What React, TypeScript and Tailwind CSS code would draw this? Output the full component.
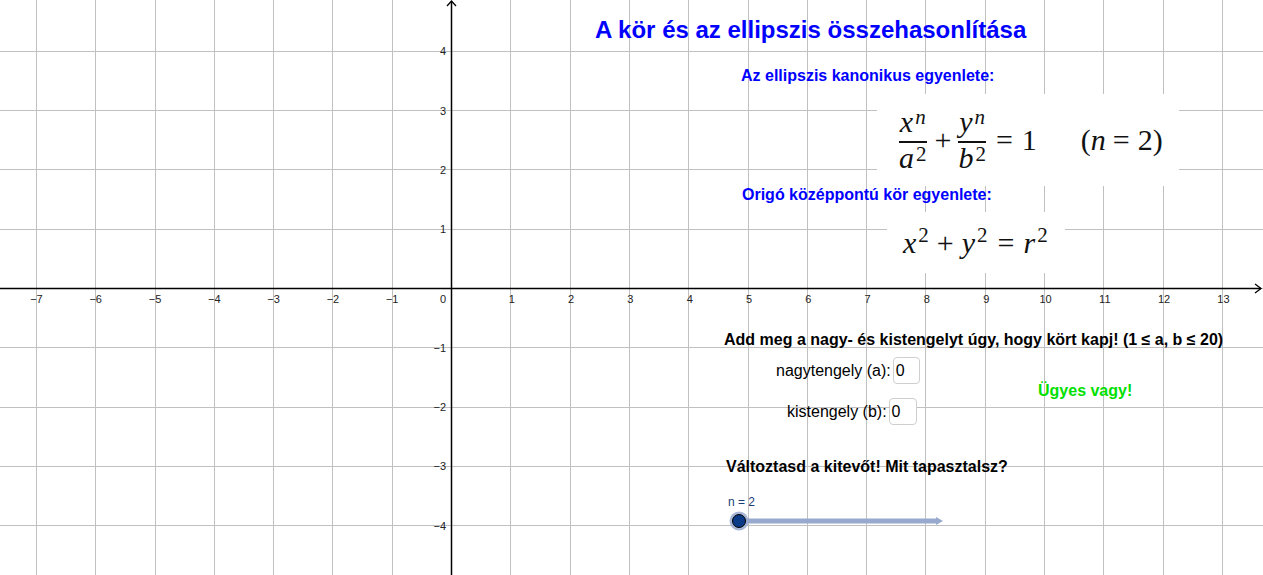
import React from "react";

const OX = 451.5;
const OY = 288.5;
const S = 59.3;
const W = 1263;
const H = 575;

const xs = Array.from({ length: 21 }, (_, i) => i - 7); // -7..13
const ys = Array.from({ length: 9 }, (_, i) => i - 4); // -4..4

const px = (v: number) => Math.floor(v) + 0.5;
const label = (n: number) => (n < 0 ? `\u2212${-n}` : `${n}`);

function Grid() {
  return (
    <svg className="absolute inset-0" width={W} height={H} viewBox={`0 0 ${W} ${H}`}>
      {xs.map((k) => (
        <line key={`v${k}`} x1={px(OX + k * S)} y1={0} x2={px(OX + k * S)} y2={H} stroke="#c0c0c0" strokeWidth={1} />
      ))}
      {ys.map((k) => (
        <line key={`h${k}`} x1={0} y1={px(OY - k * S)} x2={W} y2={px(OY - k * S)} stroke="#c0c0c0" strokeWidth={1} />
      ))}
      {/* axes */}
      <line x1={0} y1={OY} x2={1261} y2={OY} stroke="#000" strokeWidth={1.5} />
      <polyline points="1255,284 1261,288.5 1255,293" fill="none" stroke="#000" strokeWidth={1.3} />
      <line x1={OX} y1={1} x2={OX} y2={H} stroke="#000" strokeWidth={1.5} />
      <polyline points="447,6 451.5,1 456,6" fill="none" stroke="#000" strokeWidth={1.3} />
      {/* axis labels */}
      <g fontFamily="'Liberation Sans', Arial, sans-serif" fontSize={11} fill="#222">
        {xs.map((k) =>
          k === 0 ? null : (
            <text key={`xl${k}`} x={OX + k * S + (k > 0 ? 1 : 0)} y={303} textAnchor="middle">
              {label(k)}
            </text>
          )
        )}
        <text x={446} y={303} textAnchor="end">0</text>
        {ys.map((k) =>
          k === 0 ? null : (
            <text key={`yl${k}`} x={446} y={OY - k * S + 4} textAnchor="end">
              {label(k)}
            </text>
          )
        )}
      </g>
    </svg>
  );
}

// variable with a superscript; base line box is leading-none
function V({ c, sup, supCls = "" }: { c: string; sup: string; supCls?: string }) {
  return (
    <span className="inline-flex items-start leading-none">
      <span className="italic">{c}</span>
      <span className={`relative text-[21px] leading-none ml-[2px] ${sup === "2" ? "" : "italic"} ${supCls}`}>{sup}</span>
    </span>
  );
}

function Frac({ num, den }: { num: React.ReactNode; den: React.ReactNode }) {
  return (
    <span className="inline-flex flex-col items-center px-[1px]">
      <span className="flex">{num}</span>
      <span className="h-[1.5px] w-full bg-[#111] mt-[4px]" />
      <span className="flex">{den}</span>
    </span>
  );
}

function Slider() {
  return (
    <svg className="absolute left-0 top-0" width={W} height={H} viewBox={`0 0 ${W} ${H}`}>
      <line x1={739} y1={521} x2={937} y2={521} stroke="#97a9cc" strokeWidth={5} />
      <polygon points="936,517 943,521 936,525" fill="#97a9cc" />
      <circle cx={739} cy={521} r={9.5} fill="#9aaad0" opacity={0.85} />
      <circle cx={739} cy={521} r={6.5} fill="#0b3a86" stroke="#000" strokeWidth={1} />
    </svg>
  );
}

export default function App() {
  const sans = "font-['Liberation_Sans',Arial,sans-serif]";
  const serif = "font-['Liberation_Serif','Times_New_Roman',serif]";
  return (
    <div className={`relative w-[1263px] h-[575px] overflow-hidden bg-white ${sans}`}>
      <Grid />

      {/* formula boxes */}
      <div className={`absolute left-[877px] top-[94px] w-[302px] h-[92px] bg-white flex items-center pl-[21px] text-[30px] leading-none text-[#111] ${serif}`}>
        <Frac num={<V c="x" sup="n" />} den={<V c="a" sup="2" supCls="top-[1px]" />} />
        <span className="ml-[7px]">+</span>
        <span className="ml-[6px] flex">
          <Frac num={<V c="y" sup="n" />} den={<V c="b" sup="2" supCls="top-[1px]" />} />
        </span>
        <span className="ml-[9px]">=</span>
        <span className="ml-[9px]">1</span>
        <span className="ml-[44px]">(</span>
        <span className="italic">n</span>
        <span className="ml-[7px]">=</span>
        <span className="ml-[8px]">2)</span>
      </div>

      <div className={`absolute left-[887px] top-[212px] w-[178px] h-[61px] bg-white flex items-center pl-[16px] text-[30px] leading-none text-[#111] ${serif}`}>
        <V c="x" sup="2" supCls="-top-[3px]" />
        <span className="ml-[8px]">+</span>
        <span className="ml-[8px] flex">
          <V c="y" sup="2" supCls="-top-[3px]" />
        </span>
        <span className="ml-[10px]">=</span>
        <span className="ml-[9px] flex">
          <V c="r" sup="2" supCls="-top-[3px]" />
        </span>
      </div>

      {/* texts */}
      <div className="absolute left-[595px] top-[18px] text-[24px] leading-none font-bold text-[#0000ff] whitespace-nowrap">
        A kör és az ellipszis összehasonlítása
      </div>
      <div className="absolute left-[741px] top-[68px] text-[16px] leading-none font-bold text-[#0000ff] whitespace-nowrap">
        Az ellipszis kanonikus egyenlete:
      </div>
      <div className="absolute left-[742px] top-[187px] text-[16px] leading-none font-bold text-[#0000ff] whitespace-nowrap">
        Origó középpontú kör egyenlete:
      </div>
      <div className="absolute left-[724px] top-[332px] text-[16px] leading-none font-bold text-black whitespace-nowrap">
        Add meg a nagy- és kistengelyt úgy, hogy kört kapj! (1 ≤ a, b ≤ 20)
      </div>

      <div className="absolute left-[776px] top-[357px] flex items-center gap-[2px] text-[16px] text-black whitespace-nowrap">
        <span className="leading-none">nagytengely (a):</span>
        <div className="w-[27px] h-[27px] border border-[#cfcfcf] rounded-[4px] bg-white flex items-center pl-[2px] leading-none">0</div>
      </div>
      <div className="absolute left-[787px] top-[398px] flex items-center gap-[2px] text-[16px] text-black whitespace-nowrap">
        <span className="leading-none">kistengely (b):</span>
        <div className="w-[28px] h-[27px] border border-[#cfcfcf] rounded-[4px] bg-white flex items-center pl-[2px] leading-none">0</div>
      </div>

      <div className="absolute left-[1038px] top-[383px] text-[16px] leading-none font-bold text-[#00e000] whitespace-nowrap">
        Ügyes vagy!
      </div>

      <div className="absolute left-[726px] top-[459px] text-[16px] leading-none font-bold text-black whitespace-nowrap">
        Változtasd a kitevőt! Mit tapasztalsz?
      </div>

      <Slider />
      <div className="absolute left-[728px] top-[496px] text-[12px] leading-none text-[#1c3c78] whitespace-nowrap">
        n = 2
      </div>
    </div>
  );
}
